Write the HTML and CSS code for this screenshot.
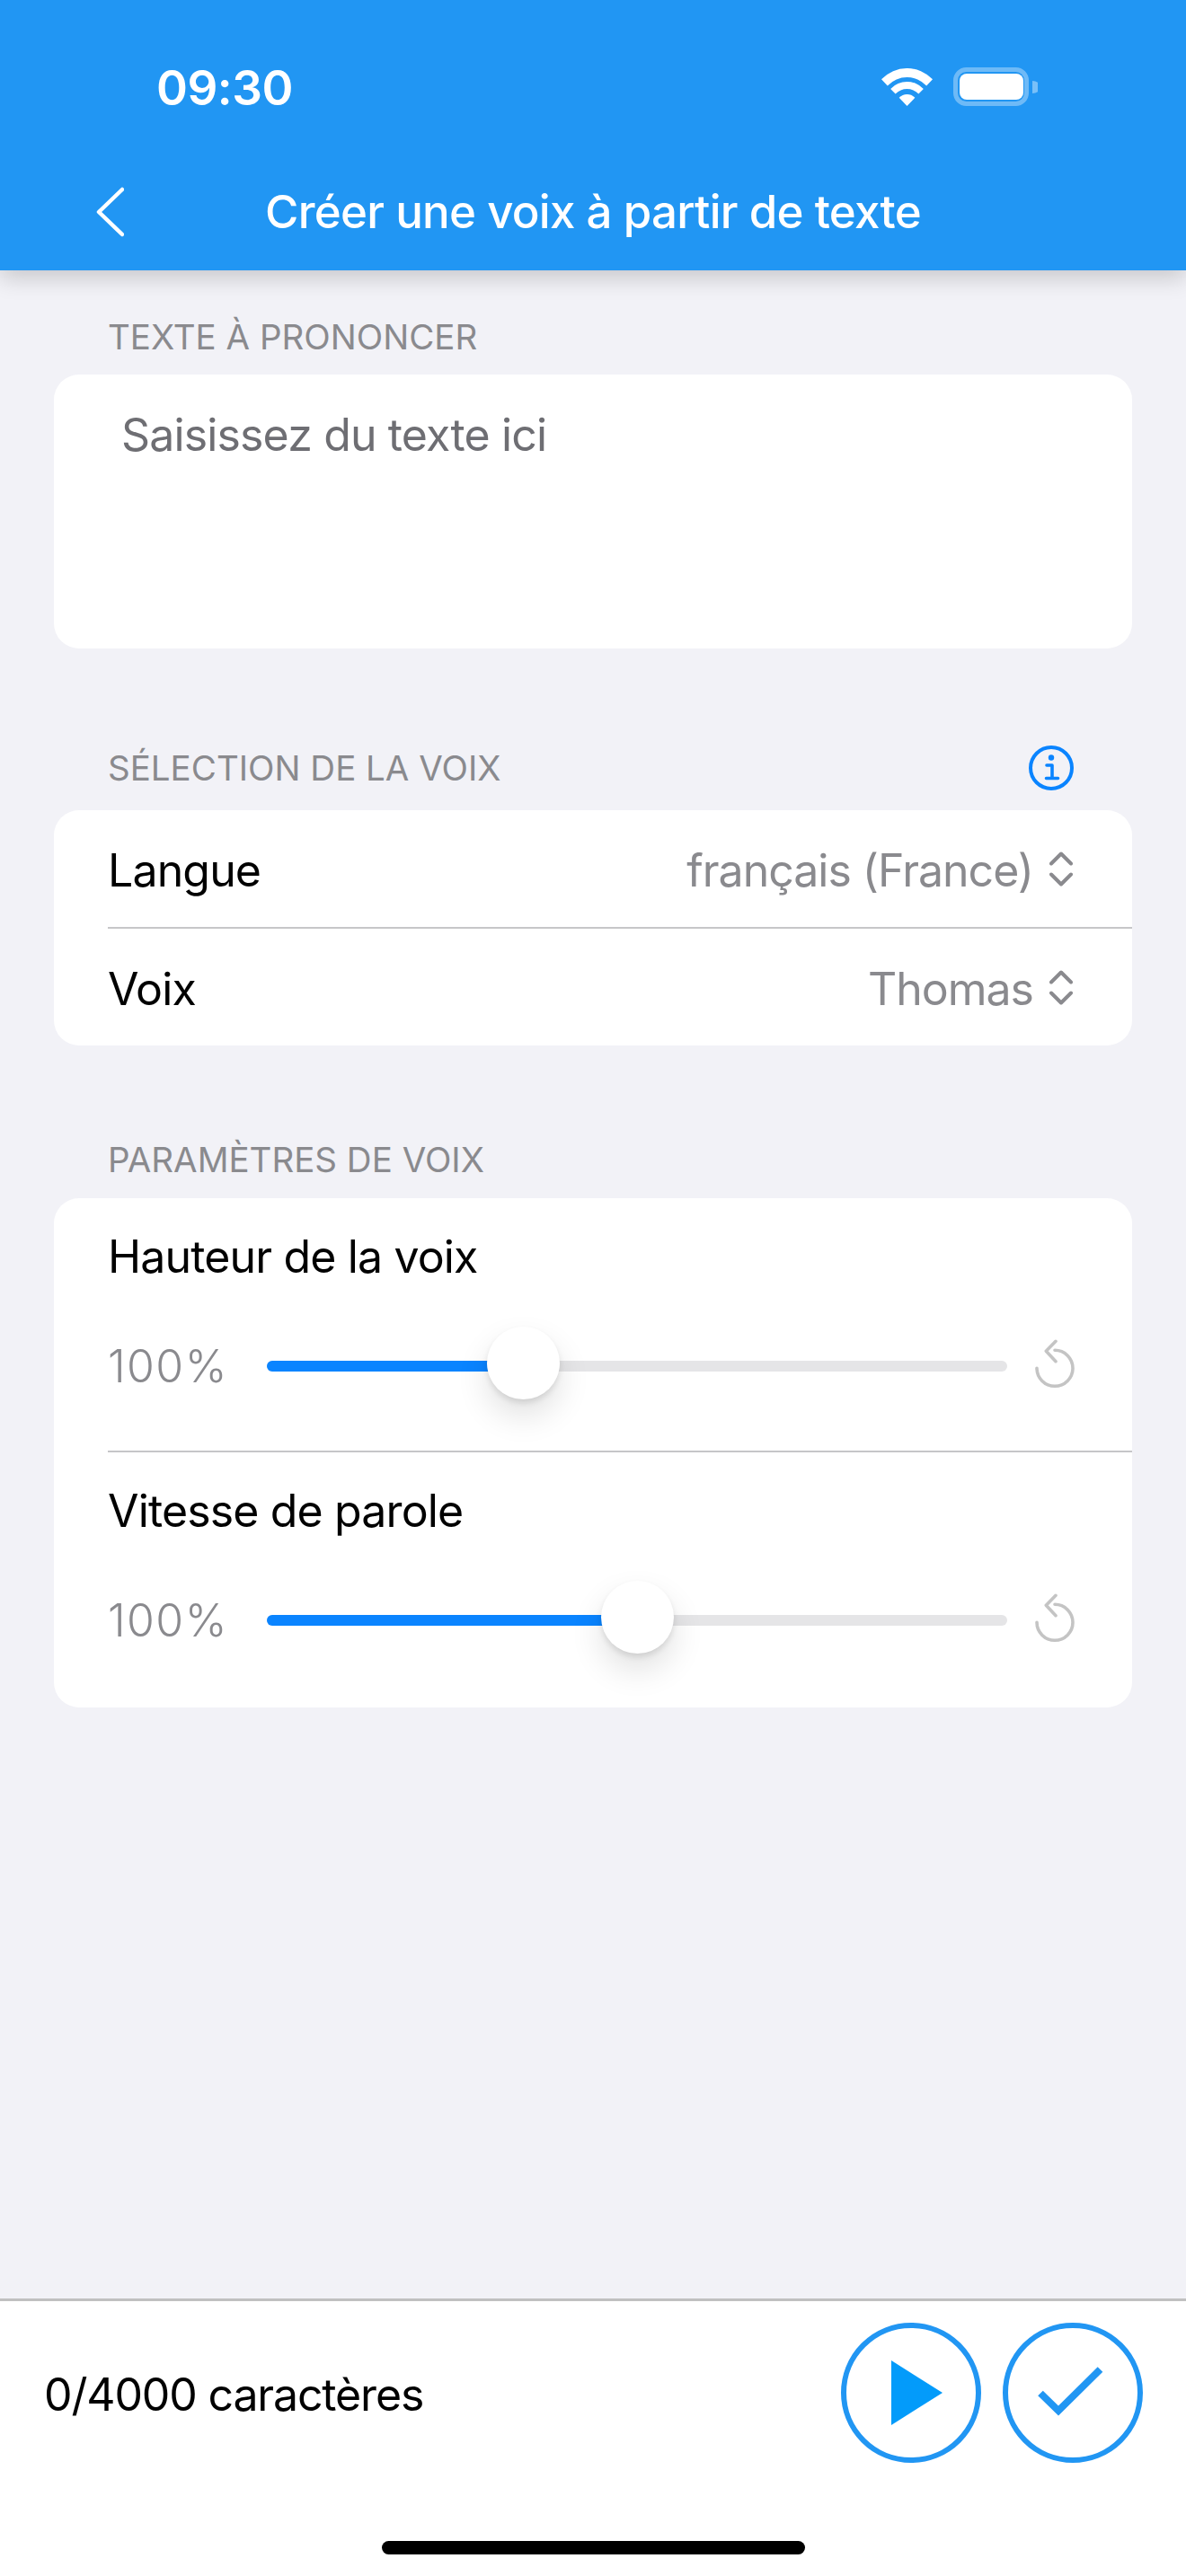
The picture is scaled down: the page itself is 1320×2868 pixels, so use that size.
FILE: index.html
```html
<!DOCTYPE html>
<html lang="fr">
<head>
<meta charset="utf-8">
<title>Créer une voix à partir de texte</title>
<link rel="stylesheet" href="styles.css">
</head>
<body>
<div class="screen">
  <header class="appbar">
    <div class="status">
      <span class="time">09:30</span>
      <div class="status-icons">
        <svg class="wifi" viewBox="-1.2 0 59.4 42" preserveAspectRatio="none"><path d="M-1.2 12.3A42 42 0 0 1 58.2 12.3L51.1 19.4A32 32 0 0 0 5.9 19.4Z"/><path d="M9.4 22.9A27 27 0 0 1 47.6 22.9L41.9 28.6A19 19 0 0 0 15.1 28.6Z"/><path d="M19.3 32.8A13 13 0 0 1 37.7 32.8L28.5 42Z"/></svg>
        <svg class="battery" viewBox="0 0 94 44"><rect class="batt-frame" x="2.5" y="2.5" width="79" height="38" rx="12"/><rect class="batt-fill" x="7" y="7" width="71" height="29" rx="8"/><path class="batt-nub" d="M88 15a9 7 0 0 1 0 14z"/></svg>
      </div>
    </div>
    <nav class="nav">
      <svg class="back" viewBox="0 0 32 56"><path d="M30 3L4 28L30 53"/></svg>
      <h1 class="title">Créer une voix à partir de texte</h1>
    </nav>
  </header>

  <main class="content">
    <section class="section section-text">
      <div class="heading"><span>TEXTE À PRONONCER</span></div>
      <div class="card text-card"><p class="placeholder">Saisissez du texte ici</p></div>
    </section>

    <section class="section section-voice">
      <div class="heading">
        <span>SÉLECTION DE LA VOIX</span>
        <svg class="info" viewBox="0 0 50 50"><circle cx="25" cy="25" r="23"/><circle class="info-dot" cx="25" cy="13.5" r="3.2"/><path d="M20 22H26V36.5M19.5 36.5H32.5"/></svg>
      </div>
      <div class="card">
        <div class="row">
          <span class="row-label">Langue</span>
          <span class="row-value">français (France)</span>
          <svg class="updown" viewBox="0 0 26 39"><path d="M2 13.5L13 2.5L24 13.5M2 25.5L13 36.5L24 25.5"/></svg>
        </div>
        <div class="row row-last">
          <span class="row-label">Voix</span>
          <span class="row-value">Thomas</span>
          <svg class="updown" viewBox="0 0 26 39"><path d="M2 13.5L13 2.5L24 13.5M2 25.5L13 36.5L24 25.5"/></svg>
        </div>
      </div>
    </section>

    <section class="section section-params">
      <div class="heading"><span>PARAMÈTRES DE VOIX</span></div>
      <div class="card">
        <div class="param">
          <div class="row-label param-label">Hauteur de la voix</div>
          <div class="slider-row">
            <span class="percent">100%</span>
            <div class="slider">
              <div class="track"><div class="fill" style="width:34.7%"></div></div>
              <div class="thumb" style="left:34.7%"></div>
            </div>
            <svg class="reset" viewBox="0 0 48 60"><path d="M4 32.3A20 20 0 1 0 24 12.3M25 2.3L14.3 13.3L25 24.7"/></svg>
          </div>
        </div>
        <div class="param param-last">
          <div class="row-label param-label">Vitesse de parole</div>
          <div class="slider-row">
            <span class="percent">100%</span>
            <div class="slider">
              <div class="track"><div class="fill" style="width:50.1%"></div></div>
              <div class="thumb" style="left:50.1%"></div>
            </div>
            <svg class="reset" viewBox="0 0 48 60"><path d="M4 32.3A20 20 0 1 0 24 12.3M25 2.3L14.3 13.3L25 24.7"/></svg>
          </div>
        </div>
      </div>
    </section>
  </main>

  <footer class="footer">
    <div class="footer-row">
      <span class="count">0/4000 caractères</span>
      <div class="actions">
        <div class="round-btn"><svg class="play" viewBox="0 0 57 72"><path d="M0 0L57 36L0 72Z"/></svg></div>
        <div class="round-btn"><svg class="check" viewBox="0 0 78 58"><path d="M3 29.5L23 49L69.5 3"/></svg></div>
      </div>
    </div>
    <div class="home-bar"></div>
  </footer>
</div>
</body>
</html>
```
FILE: styles.css
```css
* { box-sizing: border-box; }
html, body { margin: 0; padding: 0; }
body { font-family: Inter, "Liberation Sans", sans-serif; background: #f2f2f7; color: #000; }
.screen { width: 1320px; height: 2868px; display: flex; flex-direction: column; overflow: hidden; background: #f2f2f7; }

.appbar { height: 301px; background: #2196f3; color: #fff; flex: none; box-shadow: 0 8px 24px rgba(0,0,0,.18); position: relative; z-index: 1; }
.status { display: flex; justify-content: space-between; align-items: center; height: 43px; padding: 0 165px 0 174px; position: relative; top: 75px; }
.time { font-size: 53px; font-weight: 600; letter-spacing: -.5px; line-height: 43px; padding-top: 3px; }
.status-icons { display: flex; align-items: center; gap: 23px; }
.wifi { width: 57px; height: 42px; fill: #fff; display: block; }
.battery { width: 94px; height: 44px; display: block; }
.batt-frame { fill: none; stroke: rgba(255,255,255,.35); stroke-width: 5; }
.batt-fill { fill: #fff; }
.batt-nub { fill: rgba(255,255,255,.4); }
.nav { display: grid; grid-template-columns: 1fr auto 1fr; align-items: center; height: 100px; padding-left: 106px; margin-top: 143px; }
.back { width: 32px; height: 56px; fill: none; stroke: #fff; stroke-width: 4.5; stroke-linecap: round; stroke-linejoin: round; }
.title { grid-column: 2; margin: 0; position: relative; left: -53px; font-size: 51px; font-weight: 500; letter-spacing: -.72px; line-height: 60px; white-space: nowrap; }

.content { flex: 1; padding: 0 60px; }
.section-text { padding-top: 50px; }
.section-voice { padding-top: 109px; }
.section-params { padding-top: 103px; }
.heading { display: flex; justify-content: space-between; align-items: center; height: 48px; padding: 0 65px 0 60px; font-size: 38.5px; color: #8a8a8e; white-space: nowrap; }
.section-text .heading { margin-bottom: 18px; }
.section-voice .heading { margin-bottom: 23px; }
.section-params .heading { margin-bottom: 19px; }
.info { width: 50px; height: 50px; fill: none; stroke: #0a84ff; stroke-width: 4; display: block; }
.info path { stroke-width: 3.6; stroke-linecap: round; stroke-linejoin: round; }
.info-dot { fill: #0a84ff; stroke: none; }

.card { background: #fff; border-radius: 28px; }
.text-card { height: 305px; padding: 35px 75px; }
.placeholder { margin: 0; font-size: 50px; line-height: 64px; letter-spacing: -.85px; color: #6e6e73; }

.row { display: flex; align-items: center; height: 132px; margin-left: 60px; padding-right: 66px; border-bottom: 2px solid #c6c6c8; }
.row-last { height: 130px; border-bottom: 0; }
.row-label { font-size: 50px; line-height: 60px; letter-spacing: -.85px; padding-top: 3px; }
.row-value { margin-left: auto; font-size: 50px; line-height: 60px; padding-top: 3px; letter-spacing: -1px; color: #8a8a8e; }
.updown { width: 26px; height: 39px; margin-left: 18px; fill: none; stroke: #8a8a8e; stroke-width: 4; stroke-linecap: round; stroke-linejoin: round; }

.param { height: 283px; margin-left: 60px; padding-top: 32px; border-bottom: 2px solid #c6c6c8; }
.param-last { height: 284px; border-bottom: 0; }
.param-label { height: 63px; }
.slider-row { display: flex; align-items: center; height: 82px; margin-top: 51px; padding-right: 62px; }
.percent { width: 177px; flex: none; font-size: 50px; font-weight: 300; color: #8a8a8e; letter-spacing: 1.4px; }
.slider { flex: 1; position: relative; height: 12px; }
.track { height: 12px; border-radius: 6px; background: #e5e5e7; overflow: hidden; }
.fill { height: 100%; background: #0a84ff; }
.thumb { position: absolute; top: -38px; width: 81px; height: 81px; margin-left: -40.5px; border-radius: 50%; background: #fff; box-shadow: 0 4px 6px rgba(0,0,0,.1), 0 18px 36px rgba(0,0,0,.12); }
.reset { width: 48px; height: 60px; margin-left: 29px; flex: none; fill: none; stroke: #c4c4c4; stroke-width: 3.6; stroke-linecap: round; stroke-linejoin: round; }

.footer { flex: none; height: 309px; background: #fff; border-top: 3px solid #c0c0c0; padding-top: 24px; }
.footer-row { display: flex; justify-content: space-between; align-items: center; padding: 0 48px 0 49px; }
.count { font-size: 50px; letter-spacing: -1.15px; padding-top: 3px; }
.actions { display: flex; gap: 24px; }
.round-btn { width: 156px; height: 156px; border: 6px solid #2196f3; border-radius: 50%; display: flex; align-items: center; justify-content: center; }
.play { width: 57px; height: 72px; fill: #039bfa; position: relative; left: 6.5px; }
.check { width: 78px; height: 58px; fill: none; stroke: #2196f3; stroke-width: 8; }
.home-bar { width: 471px; height: 15px; margin: 87px auto 0; border-radius: 8px; background: #000; }
```
